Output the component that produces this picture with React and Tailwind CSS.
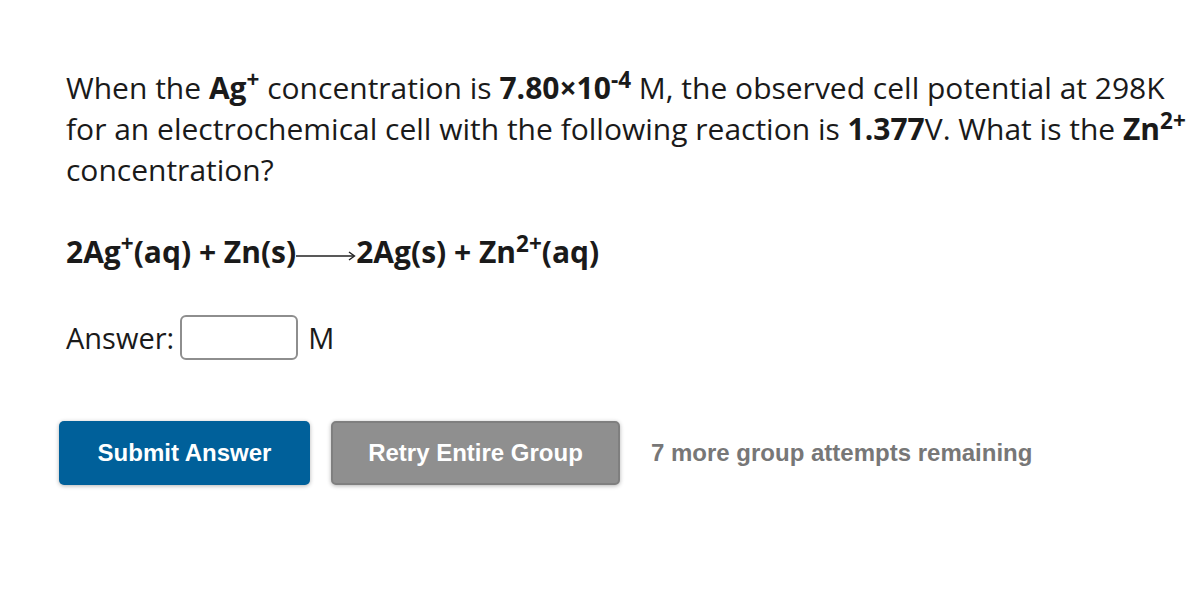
export default function App() {
  return (
    <div className="min-h-[608px] w-[1200px] bg-white text-black" style={{ fontFamily: '"Open Sans", sans-serif' }}>
      <div className="pl-[66px] pt-[67px]">
        <p className="text-[30px] leading-[41px] text-[#1a1a1a]">
          When the <b>Ag<sup>+</sup></b> concentration is <b>7.80×10<sup>-4</sup></b> M, the observed cell potential at 298K for an electrochemical cell with the following reaction is <b>1.377</b>V. What is the <b>Zn<sup>2+</sup></b> concentration?
        </p>

        <p className="mt-[44px] flex items-center text-[30px] font-bold leading-[36px] text-[#1a1a1a]">
          <span>2Ag<sup>+</sup>(aq) + Zn(s)</span>
          <svg width="60" height="14" viewBox="0 0 60 14" className="mt-[8px]">
            <line x1="0" y1="7" x2="58" y2="7" stroke="#222" strokeWidth="1.6" />
            <path d="M53 3 L58.5 7 L53 11" fill="none" stroke="#222" strokeWidth="1.4" />
          </svg>
          <span>2Ag(s) + Zn<sup>2+</sup>(aq)</span>
        </p>

        <div className="mt-[45px] flex items-center text-[29px] text-[#1a1a1a]">
          <span>Answer:</span>
          <input className="ml-[6px] h-[45px] w-[118px] rounded-[6px] border-2 border-[#8e8e8e] bg-white" />
          <span className="ml-[10px]">M</span>
        </div>
      </div>

      <div className="mt-[61px] flex items-center pl-[59px]" style={{ fontFamily: '"Liberation Sans", Arial, sans-serif' }}>
        <button className="h-[64px] w-[251px] rounded-[5px] bg-[#00609a] text-[24px] font-bold text-white shadow-[0_1px_4px_rgba(0,0,0,0.3)]">
          Submit Answer
        </button>
        <button className="ml-[21px] h-[64px] w-[289px] rounded-[5px] border-2 border-[#7f7f7f] bg-[#8f8f8f] text-[24px] font-bold text-white shadow-[0_1px_4px_rgba(0,0,0,0.3)]">
          Retry Entire Group
        </button>
        <span className="ml-[31px] text-[24px] font-bold text-[#777]">7 more group attempts remaining</span>
      </div>
    </div>
  );
}
